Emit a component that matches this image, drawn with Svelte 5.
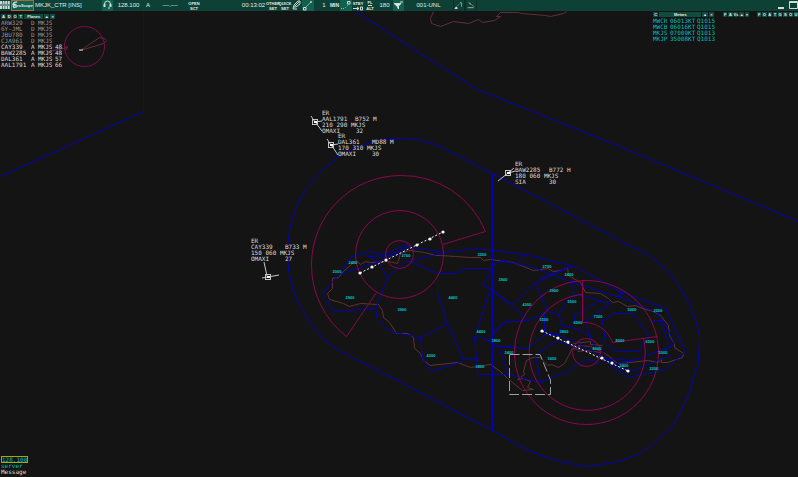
<script lang="ts">
  type Track = {
    x: number;
    y: number;
    tx: number;
    ty: number;
    lines: [string, string, number][];
    leader: string;
  };

  const departures = [
    ['ARW329', 'D', 'MKJS', ''],
    ['6Y-JML', 'D', 'MKJS', ''],
    ['JBU780', 'D', 'MKJS', ''],
    ['CJA961', 'D', 'MKJS', ''],
    ['CAY339', 'A', 'MKJS', '48'],
    ['BAW2285', 'A', 'MKJS', '48'],
    ['DAL361', 'A', 'MKJS', '57'],
    ['AAL1791', 'A', 'MKJS', '66'],
  ];

  const metars = [
    ['MWCR', '06013KT', 'Q1015'],
    ['MWCB', '06016KT', 'Q1015'],
    ['MKJS', '07009KT', 'Q1013'],
    ['MKJP', '35008KT', 'Q1013'],
  ];

  const tracks: Track[] = [
    {
      x: 315, y: 122, tx: 322, ty: 115,
      lines: [['ER', '', 0], ['AAL1791', 'B752 M', 33], ['210 290 MKJS', '', 0], ['OMAXI', '32', 34]],
      leader: 'M311 116L315 122L322 121M316 123L322 131',
    },
    {
      x: 331, y: 145, tx: 338, ty: 138,
      lines: [['ER', '', 0], ['DAL361', 'MD88 M', 34], ['170 310 MKJS', '', 0], ['OMAXI', '30', 34]],
      leader: 'M327 139L331 145L338 144M332 146L338 155',
    },
    {
      x: 508, y: 173, tx: 515, ty: 166,
      lines: [['ER', '', 0], ['BAW2285', 'B772 H', 34], ['180 060 MKJS', '', 0], ['SIA', '30', 34]],
      leader: 'M498 181L508 173L514 168M509 173L515 171',
    },
    {
      x: 268, y: 277, tx: 251, ty: 243,
      lines: [['ER', '', 0], ['CAY339', 'B733 M', 34], ['150 060 MKJS', '', 0], ['OMAXI', '27', 34]],
      leader: 'M262 278L268 277L279 275M267 276L264 262',
    },
  ];

  // minimum sector altitudes
  const altitudes: [number, number, string][] = [
    [337, 272, '2000'], [353, 263, '2400'], [406, 256, '2700'], [350, 298, '2900'],
    [402, 310, '3900'], [453, 298, '4400'], [482, 255, '3200'], [503, 280, '3900'],
    [481, 332, '4400'], [496, 341, '3800'], [431, 356, '4200'], [480, 367, '3800'],
    [509, 353, '2400'], [547, 267, '2700'], [569, 275, '2400'], [554, 291, '3900'],
    [572, 302, '5500'], [527, 305, '4300'], [544, 320, '3500'], [578, 323, '6500'],
    [598, 317, '7300'], [564, 332, '3800'], [632, 310, '5000'], [658, 311, '2200'],
    [620, 341, '8000'], [650, 342, '6500'], [663, 353, '5000'], [597, 349, '4000'],
    [624, 366, '2400'], [654, 369, '2200'], [552, 359, '1600'],
  ];

  const fixes = [
    [360, 273], [372, 267], [386, 260], [417, 245], [430, 239], [443, 232],
    [542, 331], [558, 338], [568, 342], [602, 358], [612, 363], [628, 371],
  ];
</script>

<div class="scope">
  <svg class="map" viewBox="0 0 798 477" preserveAspectRatio="xMinYMin slice" aria-hidden="true">
    <g class="coast" transform="translate(.5 .5)">
      <path d="M433 11L430 18L431 23L440 26L453 21L468 23L478 19L482 22L494 20L500 16L496 16L500 12L518 12L521 13L545 15L550 16L563 13L566 11" />
      <path d="M80 50L99 37L104 38L106 40L103 43L80 50M45 54L52 50L63 48L67 46L66 49L63 48" />
      <path d="M440 255L436 255L424 252L410 250L400 253L397 263L388 261L370 262L365 261L360 264L357 261L353 262L343 271L338 277L332 278L332 288L327 293L329 299L343 303L349 306L360 303L378 304L382 310L383 317L389 322L396 333L407 333L413 337L414 348L420 353L423 360L430 365L457 362L470 367L490 364L500 371L507 378L522 390L533 389L527 387L530 381L523 378L517 379L524 374L523 371L526 360L532 357L540 357L547 365L551 364L558 367L564 363L572 348L580 349L578 345L590 346L603 352L609 356L617 363L630 362L647 360L658 362L661 358L661 362L667 362L682 357L683 353L674 347L674 343L669 335L668 325L660 315L653 311L642 308L635 305L627 306L618 301L612 302L608 298L600 293L585 292L580 282L568 275L567 267L561 270L553 271L547 268L533 270L523 266L512 262L490 259L483 260L480 257L470 257L455 256L440 255" />
      <path d="M573 343L590 341L590 344L602 345M577 351L585 350L600 352" />
    </g>
    <g class="sector" transform="translate(.5 .5)">
      <path d="M143 11V111L0 176M355 11L475 88L629 150L798 221" />
      <path d="M397 380L340 351Q322 341 310 322A113 113 0 0 1 287 250A113 113 0 0 1 400 138Q422 138 440 146L492 173L650 256Q680 276 695 320L699 335L698 362L688 395L673 425L650 446Q630 461 600 464L586 466Q540 461 492 430L397 380M492 173V430" />
      <path d="M322 293L333 311L375 308L387 277L407 260L437 273H457L463 268H492L497 261L510 262" />
      <path d="M322 293L342 270L350 257L368 251L383 254L407 243V246L443 252L477 248L525 254L575 266L617 290L665 308L685 351L665 369L627 377L602 358" />
      <path d="M342 273L377 262L407 246M366 254L378 262L387 277M413 260L443 252M368 256L397 255L407 246" />
      <path d="M375 308L377 319L390 331L420 337L447 323L437 292V273M447 323L463 359L476 358L474 338L490 288L482 285L492 268" />
      <path d="M420 337L422 358L431 371L457 363L463 359M476 358L477 374H510M474 338L480 337L498 346H510M487 341L503 322L510 321M498 346L508 374M490 288L510 303" />
      <path d="M490 288L528 320L502 322L490 337M528 320L547 311L535 282L573 265M535 282L512 305M547 311L558 314L562 325L558 335L544 331V314M558 314L573 293L572 280M562 325L575 328L591 336M573 293L610 303L586 320L587 328L592 343L603 352M575 328L574 315L600 300" />
      <path d="M500 260L533 267L572 282L620 297L657 312L670 346L633 360L602 358M525 254L518 262M620 290V297M650 320H663L674 343L663 352M539 279L570 266" />
      <path d="M602 320L613 313H633L648 335L638 351H615L605 343ZM498 346L527 348L543 335H558L572 340L615 363L633 360" />
      <path d="M535 355L555 340L585 350M535 355L540 382L508 374L490 374M540 382L557 375L568 371L577 363L587 359L600 362M615 363L618 368L633 370L658 360L670 355" />
    </g>
    <g class="rings" transform="translate(.5 .5)">
      <circle cx="84" cy="46" r="20" />
      <circle cx="399" cy="254" r="44" />
      <circle cx="399" cy="254" r="14" />
      <path d="M442 244L485 231A90 90 0 0 0 400 175A89 89 0 0 0 311 264A90 90 0 0 0 346 336L376 292" />
      <circle cx="586" cy="352" r="72" />
      <circle cx="586" cy="352" r="14" />
      <path d="M582 294A58 58 0 1 0 643 338M582 280V322A30 30 0 0 1 612 342L657 336" />
    </g>
    <path class="danger" d="M509.500 354.500H540L550.500 380V394.500H509.500Z" />
    <path class="centreline" d="M360 273L443 232M542 331L628 371" />
    {#each fixes as [x, y]}
      <circle class="fix" cx={x} cy={y} r="1.6" />
    {/each}
    <path class="home" d="M79 50H83" />

    {#each altitudes as [x, y, label]}
      <text class="alt" {x} y={y + 1}>{label}</text>
    {/each}

    {#each tracks as track}
      <path class="leader" d={track.leader} />
      <rect class="target" x={track.x - 2.5} y={track.y - 2.5} width="5" height="5" />
      <rect class="blip" x={track.x - 1} y={track.y - 1} width="3" height="2" />
      {#each track.lines as [left, right, gap], i}
        <text class="tag" x={track.tx} y={track.ty + i * 6}>{left}</text>
        {#if right}
          <text class="tag" x={track.tx + gap} y={track.ty + i * 6}>{right}</text>
        {/if}
      {/each}
    {/each}
  </svg>

  <header>
    <button class="w11" aria-label="Menu">
      <svg viewBox="0 0 11 11"><path d="M0 2.500H10M0 7.500H10" stroke-width="3" stroke-dasharray="2 .6" /><path d="M0 5H10" /></svg>
    </button>
    <button class="logo" aria-label="EuroScope">
      <svg viewBox="0 0 22 11"><path d="M6 1L2 2L1 4H5L1 6L2 8L6 7" stroke-width="1.5" /></svg>
      <b>uroScope</b>
    </button>
    <span class="callsign">MKJK_CTR [INS]</span>
    <button class="w11 lit" aria-label="Voice">
      <svg viewBox="0 0 11 11"><path d="M2.500 6V4A3 3 0 0 1 8.500 4V6M8 8H6" /><path d="M2.500 4V7M8.500 4V7" stroke-width="2" /></svg>
    </button>
    <span class="freq">128.100</span>
    <span class="letter">A</span>
    <span class="blank">––.––</span>
    <button class="w12 stack"><span>OPEN</span><span>SCT</span></button>
    <time>00:13:02</time>
    <button class="w12 stack"><span>OTHER</span><span>SET</span></button>
    <button class="w12 stack"><span>QUICK</span><span>SET</span></button>
    <button class="w11" aria-label="Draw">
      <svg viewBox="0 0 11 11"><path d="M2 9L3 5L7 1L9 1L9 4L5 7L3 7M4 6L8 2M2 9H6" /></svg>
    </button>
    <button class="w12 lit" aria-label="Route">
      <svg viewBox="0 0 12 11"><path d="M1.500 7.500H4V10H1.500Z" /><path d="M4 7L9 2" stroke-width=".6" /><circle cx="9" cy="2" r=".6" /></svg>
    </button>
    <span class="one">1</span>
    <button class="w11 min">MIN</button>
    <button class="w12 lit" aria-label="Trail">
      <svg viewBox="0 0 12 11"><path d="M1 8.500H4M5 8L6 7M7 6L8 5" stroke-width=".7" stroke-dasharray="1 1" /><path d="M7.500 1.500H10V4H7.500Z" /></svg>
    </button>
    <button class="w12 stack" aria-label="Standby">
      <span>STBY</span>
      <svg viewBox="0 0 12 5"><path d="M1 2.500H7M5 1L7 2.500L5 4M8.500 1H10.500V4H8.500Z" /></svg>
    </button>
    <button class="w12 stack"><span class="under">FL</span><span>ALT</span></button>
    <span class="level">180</span>
    <button class="w11 lit" aria-label="Filter">
      <svg viewBox="0 0 11 11"><path d="M1 3.500H8L5.500 6V9L4 6Z" fill="#e5eeee" /><path d="M7 2H10" /></svg>
    </button>
    <span class="range">001-UNL</span>
    <button class="w12 edge" aria-label="Vector">
      <svg viewBox="0 0 12 11"><path d="M4 6L7 3" stroke="#b07840" /><path d="M7 2H9V7" stroke-width=".7" /><path d="M1 9L3 7L4 9Z" fill="#fff" /></svg>
    </button>
    <button class="w12 edge" aria-label="Separation">
      <svg viewBox="0 0 12 11"><path d="M3 1L7 5L10 7" stroke="#b07840" /><path d="M2 8H9M4 3L6 4" stroke-width=".8" /></svg>
    </button>
    <span class="grow"></span>
    <button class="w11" aria-label="Minimise">
      <svg viewBox="0 0 11 11"><path d="M2 8H8" stroke-width="2" /></svg>
    </button>
    <button class="w11" aria-label="Maximise">
      <svg viewBox="0 0 11 11"><path d="M2.500 1.500H10.500V8.500H2.500ZM2 2.500H11" /></svg>
    </button>
  </header>

  <main>
    <section class="planes">
      <div class="bar">
        <button>A</button><button>D</button><button>O</button><button>T</button>
        <b>Planes</b><button>▲</button><button>×</button>
      </div>
      <table>
        <tbody>
          {#each departures as row}
            <tr class:ground={row[1] === 'D'}>
              {#each row as cell}<td>{cell}</td>{/each}
            </tr>
          {/each}
        </tbody>
      </table>
    </section>

    <section class="metars">
      <div class="bar">
        <button>C</button><b>Metars</b><button>▲</button><button>×</button>
      </div>
      <table>
        <tbody>
          {#each metars as row}
            <tr>{#each row as cell}<td>{cell}</td>{/each}</tr>
          {/each}
        </tbody>
      </table>
    </section>

    <div class="bar short">
      <button>F</button><button>A</button><button>Vs</button><button>▲</button><button>×</button>
    </div>
    <div class="bar long">
      {#each 'FOATGSOU' as key}<button>{key}</button>{/each}
    </div>
  </main>

  <footer>
    <span class="tuned">128.100</span>
    <span class="server">server</span>
    <span>Message</span>
  </footer>
</div>

<style>
  :global(body) {
    margin: 0;
    background: #141414;
  }

  .scope {
    position: relative;
    display: flex;
    flex-direction: column;
    min-height: 100vh;
    overflow: hidden;
    color: #dcdcdc;
    font: 6px/6px 'DejaVu Sans Mono', monospace;
  }

  .map {
    position: absolute;
    inset: 0;
    width: 100%;
    height: 100%;
  }

  .map path,
  .map circle,
  .target {
    fill: none;
  }

  .coast {
    stroke: #5e3232;
  }

  .sector {
    stroke: #0404b4;
  }

  .rings {
    stroke: #8c0650;
  }

  .map .danger {
    stroke: #a0a0a0;
    stroke-dasharray: 10 3;
  }

  .map .centreline {
    stroke: #f0f0f0;
    stroke-dasharray: 2 2;
  }

  .map .fix {
    fill: #fff;
  }

  .leader,
  .target {
    stroke: #c4c4c4;
  }

  .home {
    stroke: #ddd;
  }

  .blip {
    fill: #fff;
  }

  .tag {
    fill: #dcdcdc;
    white-space: pre;
  }

  .alt {
    fill: #00c8c8;
    font: bold 4px 'Liberation Sans', Arial, sans-serif;
    text-anchor: middle;
  }

  header {
    position: relative;
    display: flex;
    height: 11px;
    background: #0d4136;
    color: #e2eae7;
    font: 6px/11px 'Liberation Sans', Arial, sans-serif;
  }

  header > * {
    flex: none;
    box-sizing: border-box;
    text-align: center;
  }

  button {
    padding: 0;
    border: 0;
    background: none;
    color: inherit;
    font: inherit;
  }

  header svg {
    display: block;
    width: 100%;
    fill: none;
    stroke: #d0dcd8;
  }

  .w11 {
    width: 11px;
  }

  .w12 {
    width: 12px;
  }

  .lit {
    background: #12604e;
  }

  .edge {
    border: solid #092f28;
    border-width: 0 1px;
  }

  .logo {
    display: flex;
    width: 23px;
    border: 1px solid #a36a3c;
    background: #12604e;
    font: bold 4px/10px 'Liberation Sans', Arial, sans-serif;
  }

  .logo svg {
    width: 22px;
    margin-right: -16px;
  }

  .callsign {
    width: 68px;
    padding-left: 1px;
    text-align: left;
  }

  .freq {
    width: 31px;
  }

  .letter {
    width: 8px;
  }

  .blank {
    width: 36px;
  }

  .stack {
    display: flex;
    flex-direction: column;
    align-items: center;
    padding-top: 1px;
    font: bold 4px/5px 'Liberation Sans', Arial, sans-serif;
  }

  .under {
    border-bottom: 1px solid #d0dcd8;
    line-height: 4px;
  }

  time {
    width: 67px;
    padding-left: 40px;
    white-space: nowrap;
  }

  .one {
    width: 15px;
    padding-left: 5px;
  }

  .min {
    font: bold 5px/11px 'Liberation Sans', Arial, sans-serif;
  }

  .level {
    width: 17px;
  }

  .range {
    width: 49px;
  }

  .grow {
    flex: 1;
  }

  main {
    position: relative;
    display: flex;
    align-items: flex-start;
    flex: 1;
  }

  .bar {
    display: flex;
    gap: 1px;
    height: 5px;
    color: #e2eae7;
    font: bold 4px/5px 'Liberation Sans', Arial, sans-serif;
  }

  .bar > * {
    flex: 1;
    background: #0f4b3e;
    font-weight: bold;
    text-align: center;
  }

  .planes {
    width: 62px;
    margin: 3px auto 0 1px;
  }

  .planes .bar {
    width: 54px;
    margin-bottom: 1px;
  }

  .planes b {
    flex: 4;
  }

  table {
    border-collapse: collapse;
    table-layout: fixed;
    width: 100%;
  }

  td {
    height: 6px;
    padding: 0;
    white-space: nowrap;
  }

  .planes td:nth-child(1) {
    width: 30px;
  }

  .planes td:nth-child(2) {
    width: 7px;
  }

  .planes td:nth-child(3) {
    width: 17px;
  }

  .ground {
    color: #969696;
  }

  .metars {
    width: 61px;
    margin: 1px 9px 0 0;
    color: #00bebe;
  }

  .metars .bar {
    margin-bottom: 1px;
  }

  .metars b {
    flex: 8;
  }

  .metars td:nth-child(1) {
    width: 17px;
  }

  .metars td:nth-child(2) {
    width: 27px;
  }

  .short {
    width: 26px;
    margin: 1px 8px 0 0;
  }

  .long {
    width: 41px;
    margin-top: 1px;
  }

  footer {
    position: relative;
    display: flex;
    flex-direction: column;
    align-items: flex-start;
    padding: 0 0 2px 1px;
  }

  .tuned {
    border: 1px solid #a8a800;
    color: #00bebe;
    line-height: 5px;
  }

  .server {
    color: #00bebe;
  }
</style>
